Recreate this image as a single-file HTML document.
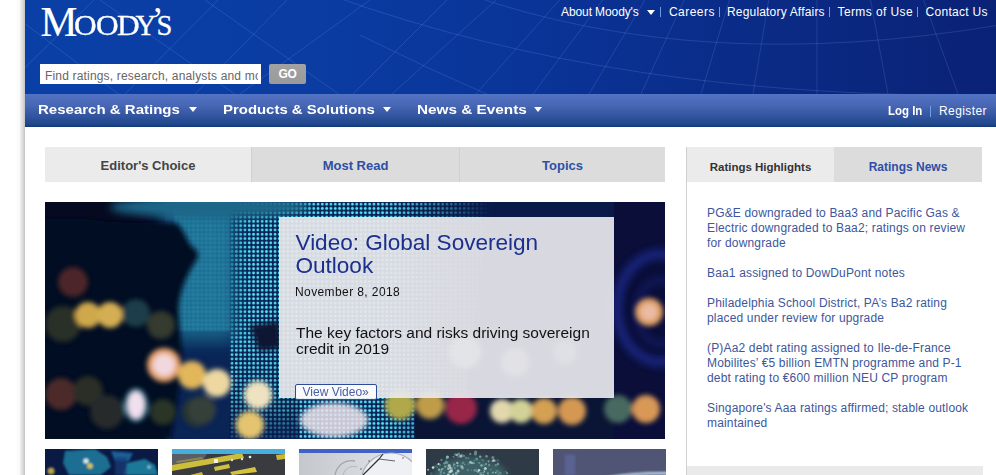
<!DOCTYPE html>
<html><head><meta charset="utf-8">
<style>
*{margin:0;padding:0;box-sizing:border-box}
html,body{width:996px;height:475px;overflow:hidden;background:#fff;font-family:"Liberation Sans",sans-serif;position:relative}
.a{position:absolute;white-space:nowrap}
#shadow{left:15px;top:0;width:10px;height:475px;background:linear-gradient(to right,#fff 0%,#f9f9f9 45%,#e8e8e8 60%,#d4d4d4 85%,#c2c2c2 100%)}
#hdr{left:25px;top:0;width:971px;height:94px;background:linear-gradient(to right,#0a40a6 0%,#0a3ca2 30%,#0a3396 55%,#0a2a84 78%,#0a2276 100%);overflow:hidden}
.lg{position:absolute;color:#fff;font-family:"Liberation Serif",serif;line-height:1;-webkit-text-stroke:0.3px #fff}
#search{left:40px;top:64px;width:221px;height:20px;background:#fff;font-size:12px;color:#666;padding:5px 0 0 5px;overflow:hidden;line-height:14px}
#search span{display:block;width:213px;overflow:hidden;letter-spacing:0.17px}
#go{left:269px;top:64px;width:37px;height:20px;background:linear-gradient(#a2a2a2,#9a9a9a);color:#fff;font-weight:bold;font-size:12px;text-align:center;line-height:21px;border-radius:2px;letter-spacing:-0.3px}
.tl{top:5px;letter-spacing:0.3px;color:#fff;font-size:12px;line-height:14px}
.sep{top:7px;width:1px;height:10px;background:#6d9ae6}
#nav{left:25px;top:94px;width:971px;height:33px;background:linear-gradient(#5373c3,#4766b4 35%,#2f529c 72%,#1d4588 94%,#123574)}
.ni{top:103px;color:#fff;font-weight:bold;font-size:13px;line-height:14px;transform-origin:0 0}
.tri{width:0;height:0;border-left:4px solid transparent;border-right:4px solid transparent;border-top:5px solid #fff}
.tab{top:147px;height:35px;line-height:38px;text-align:center;font-weight:bold;font-size:13px;color:#2e4ea8;background:#dcdcdc}
#hero{left:45px;top:202px;width:620px;height:237px;background:#0a1530;overflow:hidden}
#ov{left:279px;top:217px;width:335px;height:181px;background:rgba(232,232,236,0.93)}
#rp{left:686px;top:147px;width:1px;height:328px;background:#d0d0d0}
.rl{left:707px;margin-top:1px;color:#3d569c;font-size:12px;line-height:15px;letter-spacing:0.16px}
.thumb{top:449px;width:113px;height:26px;overflow:hidden}
</style></head><body>
<div id="shadow" class="a"></div>
<div id="hdr" class="a">
 <svg width="971" height="94" style="position:absolute;left:0;top:0" fill="none" stroke="rgba(150,185,255,0.17)" stroke-width="1"><path d="M367 94 L471.1 0 M451 94 L534.5 0 M508 94 L577.6 0 M564 94 L619.9 0 M616 94 L659.1 0 M676 94 L704.4 0 M728 94 L743.7 0 M792 94 L792.0 0 M863 94 L845.6 0 M933 94 L898.5 0 M-27 94 L69 0 M99 95 L193 0 M169 95 L262 0 M215 94 L345 0 M327 95 L422 0 M75 0 L211 95 M180 0 L315 95 M-5 20 L95 95 M445 -5 Q675 75 975 25 M305 -5 Q595 100 975 95 M335 35 Q405 70 475 100"/></svg>
 <span class="lg" style="left:15.5px;top:1.5px;font-size:41.5px;-webkit-text-stroke:0.15px #fff">M</span>
 <span class="lg" style="left:49px;top:12px;font-size:28.5px;transform:scaleX(1.1);transform-origin:0 0">O</span>
 <span class="lg" style="left:70.5px;top:12px;font-size:28.5px;transform:scaleX(1.1);transform-origin:0 0">O</span>
 <span class="lg" style="left:92px;top:12px;font-size:28.5px;transform:scaleX(1.1);transform-origin:0 0">D</span>
 <span class="lg" style="left:110.5px;top:12px;font-size:28.5px">Y</span>
 <span class="lg" style="left:126.5px;top:1.5px;font-size:36px;-webkit-text-stroke:0">’</span>
 <span class="lg" style="left:131.5px;top:12px;font-size:28.5px">S</span>
</div>
<div id="search" class="a"><span>Find ratings, research, analysts and more</span></div>
<div id="go" class="a">GO</div>

<span class="a tl" style="left:561px;letter-spacing:-0.1px">About Moody's</span>
<div class="a tri" style="left:646.5px;top:9.5px;border-left-width:4.5px;border-right-width:4.5px"></div>
<div class="a sep" style="left:660px"></div>
<span class="a tl" style="left:669px;letter-spacing:0.45px">Careers</span>
<div class="a sep" style="left:718.5px"></div>
<span class="a tl" style="left:727px;letter-spacing:0.18px">Regulatory Affairs</span>
<div class="a sep" style="left:828.5px"></div>
<span class="a tl" style="left:837.5px;letter-spacing:0.4px">Terms of Use</span>
<div class="a sep" style="left:916.5px"></div>
<span class="a tl" style="left:925.5px">Contact Us</span>

<div id="nav" class="a"></div>
<span class="a ni" style="left:38px;transform:scaleX(1.155)">Research &amp; Ratings</span>
<div class="a tri" style="left:188.5px;top:107px"></div>
<span class="a ni" style="left:223px;transform:scaleX(1.148)">Products &amp; Solutions</span>
<div class="a tri" style="left:382.5px;top:107px"></div>
<span class="a ni" style="left:417px;transform:scaleX(1.178)">News &amp; Events</span>
<div class="a tri" style="left:534px;top:107px"></div>
<span class="a" style="left:887.5px;top:104px;color:#fff;font-size:12px;font-weight:bold;line-height:14px;transform:scaleX(0.955);transform-origin:0 0">Log In</span>
<div class="a" style="left:930px;top:106px;width:1px;height:11px;background:#6fa0e4"></div>
<span class="a" style="left:939px;top:104px;color:#fff;font-size:12px;line-height:14px;letter-spacing:0.4px">Register</span>

<div class="a tab" style="left:45px;width:206px;background:#ebebeb;color:#444">Editor's Choice</div>
<div class="a tab" style="left:251px;width:208px;border-left:1px solid #d0d0d0">Most Read</div>
<div class="a tab" style="left:459px;width:206px;border-left:1px solid #d0d0d0">Topics</div>

<div id="hero" class="a"><svg width="620" height="237" viewBox="0 0 620 237">
 <defs>
  <pattern id="dots" width="4.3" height="4.3" patternUnits="userSpaceOnUse"><circle cx="2.15" cy="2.15" r="1.4" fill="#56e0f4"/></pattern>
  <pattern id="dots2" width="4.3" height="4.3" patternUnits="userSpaceOnUse"><circle cx="2.15" cy="2.15" r="1.6" fill="#3ab0d0"/></pattern>
  <linearGradient id="fadeb" x1="0" y1="0" x2="0" y2="1"><stop offset="0" stop-color="#06102a" stop-opacity="0"/><stop offset="0.55" stop-color="#06102a" stop-opacity="0.15"/><stop offset="1" stop-color="#081a50" stop-opacity="0.75"/></linearGradient>
  <linearGradient id="mg" x1="0" x2="1"><stop offset="0" stop-color="#fff"/><stop offset="0.55" stop-color="#fff"/><stop offset="0.92" stop-color="#000"/></linearGradient><mask id="mk" maskUnits="userSpaceOnUse" x="0" y="0" width="620" height="237"><rect x="184" y="0" width="286" height="237" fill="url(#mg)"/></mask>
  <mask id="mk2" maskUnits="userSpaceOnUse" x="0" y="0" width="620" height="237"><rect x="120" y="0" width="350" height="237" fill="url(#mg)"/></mask>
  <filter id="b2" x="-50%" y="-50%" width="200%" height="200%"><feGaussianBlur stdDeviation="2.6"/></filter>
  <filter id="b4" x="-50%" y="-50%" width="200%" height="200%"><feGaussianBlur stdDeviation="4"/></filter>
  <filter id="b8" x="-50%" y="-50%" width="200%" height="200%"><feGaussianBlur stdDeviation="8"/></filter>
  <filter id="b1" x="-50%" y="-50%" width="200%" height="200%"><feGaussianBlur stdDeviation="1.2"/></filter>
 </defs>
 <rect width="620" height="237" fill="#050a20"/>
 <rect x="120" y="0" width="500" height="237" fill="#0a1a48"/>
 <path d="M120 0 L470 0 L440 40 L420 196 L410 237 L120 237 Z" fill="#0a2456" mask="url(#mk2)"/>
 <path d="M184 0 L470 0 L440 40 L420 196 L410 237 L184 237 Z" fill="url(#dots)" mask="url(#mk)"/>
 <rect x="184" y="140" width="70" height="97" fill="url(#fadeb)"/>
 <rect x="118" y="-10" width="72" height="150" fill="#145e84" filter="url(#b8)"/>
 <rect x="128" y="0" width="58" height="130" fill="url(#dots2)" filter="url(#b1)" opacity="0.7"/>
 <ellipse cx="165" cy="5" rx="100" ry="11" fill="#1a6688" filter="url(#b4)"/>
 <path d="M-10 17 L40 17 C80 23 110 19 132 21 C140 30 142 38 146 44 C152 48 156 52 150 60 C144 70 138 80 134 100 C132 120 140 150 136 175 C132 200 128 220 126 237 L-10 237 Z" fill="#050a20" filter="url(#b2)"/>
 <path d="M205 124 L234 119 L236 146 L214 149 Z" fill="#0a1430" filter="url(#b2)"/>
 <rect x="370" y="196" width="250" height="41" fill="#0a1535"/>
 <rect x="569" y="0" width="51" height="237" fill="#0a0e38"/>
 <ellipse cx="616" cy="106" rx="44" ry="54" fill="none" stroke="#2a40d0" stroke-width="8" filter="url(#b4)" opacity="0.55"/>
 <ellipse cx="616" cy="110" rx="24" ry="32" fill="none" stroke="#2436b8" stroke-width="5" filter="url(#b4)" opacity="0.4"/>
 <g filter="url(#b2)">
  <circle cx="18" cy="122" r="18" fill="#2e3429" opacity="0.9"/>
  <circle cx="28" cy="80" r="15" fill="#5a2a2a" opacity="0.85"/>
  <circle cx="43" cy="113" r="13" fill="#cfa84c"/>
  <circle cx="65" cy="113" r="13" fill="#d4ae52"/>
  <circle cx="91" cy="111" r="14" fill="#1a3e4a"/>
  <circle cx="116" cy="123" r="14" fill="#363a2e"/>
  <circle cx="16" cy="192" r="16" fill="#4e2a2a"/>
  <circle cx="43" cy="189" r="15" fill="#2a2e28"/>
  <circle cx="62" cy="210" r="17" fill="#262a2a"/>
  <circle cx="118" cy="210" r="13" fill="#2c3428"/>
  <circle cx="152" cy="210" r="15" fill="#283430"/>
  <circle cx="119" cy="163" r="17" fill="#e6a26a"/>
  <circle cx="119" cy="163" r="11" fill="#f2d8de"/>
  <circle cx="147" cy="173" r="14" fill="#e2b65a"/>
  <ellipse cx="91" cy="203" rx="12" ry="17" fill="#5ac0d0" opacity="0.6"/>
  <ellipse cx="91" cy="203" rx="9" ry="14" fill="#f0e0ee"/>
  <circle cx="172" cy="181" r="14" fill="#ecd8a0"/>
  <circle cx="157" cy="208" r="14" fill="#34403a"/>
  <circle cx="205" cy="223" r="14" fill="#e4c470"/>
  <circle cx="213" cy="193" r="14" fill="#eee2c0"/>
  <ellipse cx="289" cy="218" rx="34" ry="17" fill="#ece2ea" opacity="0.85"/>
  <circle cx="355" cy="203" r="15" fill="#b0a848"/>
  <circle cx="385" cy="203" r="14" fill="#c09c48"/>
  <circle cx="416" cy="206" r="16" fill="#98284a"/>
  <circle cx="457" cy="209" r="12" fill="#e2d8ae"/>
  <circle cx="476" cy="209" r="12" fill="#d2d298"/>
  <circle cx="499" cy="209" r="13" fill="#d4a052"/>
  <circle cx="527" cy="209" r="14" fill="#d49852"/>
  <circle cx="573" cy="207" r="14" fill="#466a60"/>
  <circle cx="601" cy="207" r="14" fill="#d89856"/>
  <circle cx="604" cy="110" r="14" fill="#e0a064"/>
  <circle cx="604" cy="110" r="8" fill="#eabca6"/>
  <circle cx="420" cy="150" r="16" fill="#f0f0f0" opacity="0.6"/>
  <circle cx="470" cy="160" r="14" fill="#f0f0f0" opacity="0.5"/>
  <circle cx="520" cy="150" r="12" fill="#f0f0f0" opacity="0.4"/>
 </g>
</svg></div>
<div id="ov" class="a"></div>
<span class="a" style="left:295.5px;top:230.5px;color:#1b2f8e;font-size:22.6px;line-height:23px;letter-spacing:-0.03px">Video: Global Sovereign<br>Outlook</span>
<span class="a" style="left:295px;top:285px;color:#111;font-size:12px;line-height:14px;letter-spacing:0.4px">November 8, 2018</span>
<span class="a" style="left:296px;top:325px;color:#111;font-size:15.5px;line-height:16px">The key factors and risks driving sovereign<br>credit in 2019</span>
<div class="a" style="left:295px;top:384px;width:82px;height:16px;border:1px solid #2d4b9a;border-radius:2px;background:rgba(255,255,255,0.85)"></div>
<span class="a" style="left:302.5px;top:384.5px;color:#4a60a6;font-size:12px;line-height:14px">View Video»</span>

<div id="rp" class="a"></div>
<div class="a tab" style="left:687px;width:147px;background:#ebebeb;color:#333;font-size:11.5px;line-height:40px">Ratings Highlights</div>
<div class="a tab" style="left:834px;width:148px;font-size:12px;line-height:40px">Ratings News</div>
<div class="a rl" style="top:205px">PG&amp;E downgraded to Baa3 and Pacific Gas &amp;<br>Electric downgraded to Baa2; ratings on review<br>for downgrade</div>
<div class="a rl" style="top:265px">Baa1 assigned to DowDuPont notes</div>
<div class="a rl" style="top:295px">Philadelphia School District, PA’s Ba2 rating<br>placed under review for upgrade</div>
<div class="a rl" style="top:340px">(P)Aa2 debt rating assigned to Ile-de-France<br>Mobilites’ €5 billion EMTN programme and P-1<br>debt rating to €600 million NEU CP program</div>
<div class="a rl" style="top:400px">Singapore's Aaa ratings affirmed; stable outlook<br>maintained</div>
<div class="a" style="left:687px;top:466px;width:296px;height:9px;background:#eaeaea"></div>

<div class="a thumb" style="left:45px"><svg width="113" height="26"><defs><filter id="tb1"><feGaussianBlur stdDeviation="1.3"/></filter></defs>
 <rect width="113" height="26" fill="#0a1a44"/>
 <g filter="url(#tb1)">
 <path d="M20 2 L50 0 L62 8 L66 18 L56 26 L24 26 L18 14 Z" fill="#1a6e92"/>
 <path d="M66 2 L88 4 L84 12 L70 12 Z" fill="#2070a8" opacity="0.8"/>
 <path d="M82 14 L100 10 L110 16 L113 26 L78 26 Z" fill="#1e7898"/>
 <rect x="70" y="8" width="12" height="18" fill="#183a7a" opacity="0.7"/>
 <circle cx="41" cy="12" r="2.6" fill="#d8ecf0"/><circle cx="45" cy="17" r="2.8" fill="#d8c460"/><circle cx="6" cy="22" r="3.6" fill="#b8a048"/><circle cx="104" cy="18" r="1.5" fill="#a0d0e0"/>
 </g>
</svg></div>
<div class="a thumb" style="left:172px"><svg width="113" height="26"><defs><filter id="tb2"><feGaussianBlur stdDeviation="0.7"/></filter></defs>
 <rect width="113" height="26" fill="#393b3e"/>
 <g filter="url(#tb2)">
 <path d="M0 5 L35 5 L30 13 L0 16 Z" fill="#5a5e66"/>
 <path d="M0 16 L70 4 L72 9 L0 22 Z" fill="#cdbd3c"/>
 <path d="M4 12 L30 8 L31 10 L5 14 Z" fill="#b0a040" opacity="0.6"/>
 <path d="M42 18 L57 15 L58 19 L43 22 Z" fill="#cfc040"/>
 <path d="M58 23 L83 18 L85 23 L60 26 Z" fill="#d4c23e"/>
 <path d="M104 6 L113 5 L113 10 L105 11 Z" fill="#c8b838"/>
 <path d="M18 26 L30 23 L31 26 Z" fill="#c8b838"/>
 <rect x="42" y="10" width="4" height="4" fill="#f0f0f0"/><circle cx="60" cy="11" r="1.2" fill="#ddd"/><circle cx="70" cy="10" r="1.2" fill="#ddd"/><circle cx="78" cy="8" r="1.3" fill="#eee"/>
 </g>
 <rect width="113" height="5" fill="#45b0e0"/>
</svg></div>
<div class="a thumb" style="left:299px"><svg width="113" height="26"><defs><filter id="tb3"><feGaussianBlur stdDeviation="0.7"/></filter><linearGradient id="g3" x1="0" x2="1"><stop offset="0" stop-color="#c4c8cc"/><stop offset="1" stop-color="#e4e8ec"/></linearGradient></defs>
 <rect width="113" height="26" fill="url(#g3)"/>
 <rect width="113" height="4" fill="#3f62c4"/>
 <g filter="url(#tb3)"><circle cx="92" cy="34" r="30" fill="#eef0f4" stroke="#a8b0bc" stroke-width="1.2"/>
 <path d="M64 26 L80 10 L84 5" stroke="#2c3038" stroke-width="1.2" fill="none"/><path d="M80 10 L96 12" stroke="#50565e" stroke-width="0.9" fill="none"/>
 <circle cx="70" cy="12" r="0.8" fill="#666"/><circle cx="104" cy="9" r="0.8" fill="#666"/><circle cx="62" cy="20" r="0.8" fill="#666"/>
 <path d="M36 26 C38 16 46 10 56 12" stroke="#a0a6b0" stroke-width="1.3" fill="none"/><path d="M44 26 C46 19 52 16 58 18" stroke="#b0b6c0" stroke-width="1" fill="none"/></g>
</svg></div>
<div class="a thumb" style="left:426px"><svg width="113" height="26"><defs><filter id="tb4"><feGaussianBlur stdDeviation="0.5"/></filter><filter id="tb4b"><feGaussianBlur stdDeviation="3"/></filter></defs>
 <rect width="113" height="26" fill="#2e3a46"/>
 <ellipse cx="44" cy="30" rx="38" ry="22" fill="#4a7a7c" opacity="0.6" filter="url(#tb4b)"/>
 <g filter="url(#tb4)"><circle cx="19.3" cy="17.6" r="1.2" fill="#b8e0d8" opacity="0.52"/><circle cx="61.9" cy="24.4" r="1.1" fill="#b8e0d8" opacity="0.44"/><circle cx="46.2" cy="14.0" r="1.2" fill="#88c8c0" opacity="0.82"/><circle cx="69.8" cy="23.7" r="0.8" fill="#d8f0e8" opacity="0.74"/><circle cx="72.0" cy="15.1" r="1.3" fill="#b8e0d8" opacity="0.46"/><circle cx="64.8" cy="20.8" r="0.7" fill="#5a9a98" opacity="0.86"/><circle cx="22.3" cy="25.9" r="1.4" fill="#b8e0d8" opacity="0.88"/><circle cx="66.7" cy="23.8" r="1.1" fill="#5a9a98" opacity="0.80"/><circle cx="35.7" cy="17.6" r="1.5" fill="#d8f0e8" opacity="0.50"/><circle cx="7.1" cy="18.6" r="1.3" fill="#d8f0e8" opacity="0.88"/><circle cx="11.1" cy="15.6" r="0.7" fill="#5a9a98" opacity="0.64"/><circle cx="40.1" cy="9.1" r="1.4" fill="#5a9a98" opacity="0.59"/><circle cx="36.5" cy="19.1" r="1.5" fill="#b8e0d8" opacity="0.48"/><circle cx="21.4" cy="8.1" r="1.6" fill="#88c8c0" opacity="0.89"/><circle cx="32.1" cy="22.1" r="1.5" fill="#d8f0e8" opacity="0.66"/><circle cx="18.2" cy="14.4" r="0.9" fill="#5a9a98" opacity="0.89"/><circle cx="31.3" cy="13.9" r="1.2" fill="#d8f0e8" opacity="0.61"/><circle cx="34.3" cy="8.0" r="1.0" fill="#5a9a98" opacity="0.44"/><circle cx="25.4" cy="20.1" r="1.6" fill="#b8e0d8" opacity="0.50"/><circle cx="27.6" cy="17.1" r="0.7" fill="#88c8c0" opacity="0.65"/><circle cx="53.2" cy="14.0" r="1.2" fill="#5a9a98" opacity="0.71"/><circle cx="23.2" cy="16.6" r="1.6" fill="#d8f0e8" opacity="0.65"/><circle cx="22.0" cy="18.2" r="0.8" fill="#5a9a98" opacity="0.66"/><circle cx="11.0" cy="18.1" r="0.9" fill="#5a9a98" opacity="0.81"/><circle cx="27.9" cy="8.3" r="0.9" fill="#88c8c0" opacity="0.32"/><circle cx="12.6" cy="15.2" r="1.3" fill="#88c8c0" opacity="0.44"/><circle cx="50.2" cy="21.0" r="1.3" fill="#5a9a98" opacity="0.66"/><circle cx="12.6" cy="15.0" r="0.9" fill="#d8f0e8" opacity="0.88"/><circle cx="60.5" cy="7.3" r="1.4" fill="#88c8c0" opacity="0.57"/><circle cx="20.4" cy="9.6" r="0.9" fill="#5a9a98" opacity="0.64"/><circle cx="57.3" cy="25.7" r="1.0" fill="#88c8c0" opacity="0.67"/><circle cx="44.3" cy="5.0" r="0.9" fill="#b8e0d8" opacity="0.58"/><circle cx="45.5" cy="21.1" r="0.6" fill="#88c8c0" opacity="0.55"/><circle cx="13.9" cy="15.9" r="1.1" fill="#5a9a98" opacity="0.80"/><circle cx="79.7" cy="22.7" r="0.7" fill="#5a9a98" opacity="0.81"/><circle cx="30.2" cy="24.2" r="1.5" fill="#88c8c0" opacity="0.78"/><circle cx="72.3" cy="25.3" r="0.8" fill="#d8f0e8" opacity="0.31"/><circle cx="21.8" cy="13.1" r="0.7" fill="#b8e0d8" opacity="0.61"/><circle cx="2.1" cy="20.7" r="1.0" fill="#d8f0e8" opacity="0.62"/><circle cx="17.0" cy="19.8" r="0.8" fill="#88c8c0" opacity="0.79"/><circle cx="15.4" cy="10.9" r="1.1" fill="#d8f0e8" opacity="0.38"/><circle cx="47.9" cy="14.1" r="0.9" fill="#88c8c0" opacity="0.75"/><circle cx="44.4" cy="13.3" r="1.5" fill="#d8f0e8" opacity="0.58"/><circle cx="54.7" cy="24.6" r="1.6" fill="#b8e0d8" opacity="0.33"/><circle cx="42.2" cy="15.3" r="1.0" fill="#5a9a98" opacity="0.49"/><circle cx="33.8" cy="16.5" r="1.0" fill="#5a9a98" opacity="0.46"/><circle cx="66.6" cy="12.1" r="1.0" fill="#d8f0e8" opacity="0.64"/><circle cx="54.2" cy="7.6" r="1.2" fill="#d8f0e8" opacity="0.53"/><circle cx="36.4" cy="14.6" r="1.0" fill="#5a9a98" opacity="0.60"/><circle cx="58.4" cy="16.0" r="1.3" fill="#5a9a98" opacity="0.45"/><circle cx="32.6" cy="5.1" r="1.6" fill="#5a9a98" opacity="0.86"/><circle cx="49.4" cy="5.0" r="1.5" fill="#d8f0e8" opacity="0.37"/><circle cx="68.4" cy="11.8" r="1.3" fill="#b8e0d8" opacity="0.62"/><circle cx="63.1" cy="16.0" r="1.1" fill="#d8f0e8" opacity="0.36"/><circle cx="22.4" cy="19.8" r="1.3" fill="#d8f0e8" opacity="0.62"/><circle cx="27.2" cy="7.5" r="0.6" fill="#d8f0e8" opacity="0.50"/><circle cx="14.7" cy="25.0" r="1.2" fill="#5a9a98" opacity="0.72"/><circle cx="55.3" cy="25.4" r="0.7" fill="#88c8c0" opacity="0.76"/><circle cx="71.7" cy="11.6" r="1.5" fill="#5a9a98" opacity="0.34"/><circle cx="27.1" cy="25.6" r="1.1" fill="#88c8c0" opacity="0.90"/><circle cx="66.9" cy="8.6" r="1.5" fill="#b8e0d8" opacity="0.45"/><circle cx="49.6" cy="3.1" r="1.6" fill="#88c8c0" opacity="0.53"/><circle cx="32.1" cy="7.9" r="0.8" fill="#b8e0d8" opacity="0.40"/><circle cx="29.5" cy="5.5" r="1.3" fill="#b8e0d8" opacity="0.40"/><circle cx="35.6" cy="7.9" r="1.4" fill="#5a9a98" opacity="0.41"/><circle cx="15.0" cy="22.9" r="1.3" fill="#5a9a98" opacity="0.86"/><circle cx="71.1" cy="22.3" r="1.5" fill="#5a9a98" opacity="0.65"/><circle cx="28.9" cy="19.1" r="0.8" fill="#88c8c0" opacity="0.78"/><circle cx="31.6" cy="16.8" r="1.0" fill="#88c8c0" opacity="0.76"/><circle cx="62.6" cy="12.3" r="1.1" fill="#d8f0e8" opacity="0.42"/><circle cx="67.5" cy="11.1" r="1.1" fill="#d8f0e8" opacity="0.54"/><circle cx="25.4" cy="22.0" r="1.6" fill="#d8f0e8" opacity="0.73"/><circle cx="62.0" cy="25.3" r="0.7" fill="#5a9a98" opacity="0.41"/><circle cx="55.0" cy="10.0" r="0.8" fill="#5a9a98" opacity="0.32"/><circle cx="5.3" cy="24.6" r="1.4" fill="#5a9a98" opacity="0.37"/><circle cx="26.4" cy="18.1" r="0.6" fill="#5a9a98" opacity="0.65"/><circle cx="28.2" cy="15.5" r="1.2" fill="#88c8c0" opacity="0.59"/><circle cx="62.3" cy="17.5" r="0.7" fill="#5a9a98" opacity="0.38"/><circle cx="19.6" cy="14.2" r="0.7" fill="#5a9a98" opacity="0.37"/><circle cx="70.0" cy="15.4" r="0.7" fill="#5a9a98" opacity="0.48"/><circle cx="48.3" cy="11.7" r="0.7" fill="#5a9a98" opacity="0.70"/><circle cx="20.2" cy="12.3" r="0.8" fill="#88c8c0" opacity="0.75"/><circle cx="74.1" cy="24.1" r="1.5" fill="#88c8c0" opacity="0.37"/><circle cx="56.9" cy="11.2" r="1.2" fill="#5a9a98" opacity="0.55"/><circle cx="38.8" cy="15.6" r="0.7" fill="#d8f0e8" opacity="0.41"/><circle cx="15.7" cy="20.5" r="1.0" fill="#b8e0d8" opacity="0.65"/><circle cx="24.3" cy="18.7" r="1.1" fill="#d8f0e8" opacity="0.82"/><circle cx="18.8" cy="13.9" r="1.5" fill="#5a9a98" opacity="0.61"/><circle cx="35.8" cy="6.1" r="1.4" fill="#b8e0d8" opacity="0.34"/><circle cx="69.8" cy="16.2" r="1.2" fill="#88c8c0" opacity="0.41"/><circle cx="55.5" cy="16.4" r="1.2" fill="#88c8c0" opacity="0.89"/><circle cx="18.0" cy="23.9" r="1.2" fill="#88c8c0" opacity="0.42"/><circle cx="23.8" cy="22.9" r="1.4" fill="#d8f0e8" opacity="0.77"/><circle cx="37.3" cy="13.8" r="1.2" fill="#5a9a98" opacity="0.79"/><circle cx="50.6" cy="9.9" r="1.5" fill="#5a9a98" opacity="0.89"/><circle cx="50.2" cy="22.4" r="0.7" fill="#d8f0e8" opacity="0.41"/><circle cx="57.9" cy="21.6" r="0.8" fill="#b8e0d8" opacity="0.40"/><circle cx="58.6" cy="22.7" r="0.7" fill="#b8e0d8" opacity="0.79"/><circle cx="20.5" cy="13.9" r="1.4" fill="#b8e0d8" opacity="0.39"/><circle cx="48.4" cy="21.4" r="1.1" fill="#88c8c0" opacity="0.52"/><circle cx="41.9" cy="21.1" r="1.5" fill="#5a9a98" opacity="0.50"/><circle cx="53.0" cy="21.3" r="1.3" fill="#d8f0e8" opacity="0.81"/><circle cx="59.3" cy="19.5" r="1.5" fill="#d8f0e8" opacity="0.78"/><circle cx="34.7" cy="7.2" r="1.4" fill="#d8f0e8" opacity="0.59"/><circle cx="30.8" cy="6.1" r="1.1" fill="#b8e0d8" opacity="0.72"/><circle cx="60.0" cy="15.0" r="0.9" fill="#b8e0d8" opacity="0.55"/><circle cx="37.9" cy="6.9" r="1.1" fill="#88c8c0" opacity="0.54"/><circle cx="67.1" cy="23.2" r="0.8" fill="#b8e0d8" opacity="0.52"/><circle cx="57.2" cy="23.6" r="0.8" fill="#88c8c0" opacity="0.58"/><circle cx="42.4" cy="9.1" r="1.0" fill="#88c8c0" opacity="0.38"/><circle cx="9.0" cy="17.2" r="1.0" fill="#5a9a98" opacity="0.54"/><circle cx="52.1" cy="22.8" r="1.1" fill="#b8e0d8" opacity="0.54"/><circle cx="81.0" cy="24.2" r="1.1" fill="#b8e0d8" opacity="0.44"/><circle cx="13.1" cy="20.8" r="1.2" fill="#d8f0e8" opacity="0.51"/></g>
</svg></div>
<div class="a thumb" style="left:553px"><svg width="113" height="26"><defs><filter id="tb5"><feGaussianBlur stdDeviation="1"/></filter></defs>
 <rect width="113" height="26" fill="#4c5078"/>
 <rect x="0" y="0" width="113" height="26" fill="#565a72" opacity="0.5"/>
 <g filter="url(#tb5)"><ellipse cx="110" cy="40" rx="80" ry="16" fill="#4a5c8c" stroke="#c8e0f0" stroke-width="2"/><rect x="12" y="6" width="10" height="20" fill="#6070b0" opacity="0.5"/></g>
</svg></div>
</body></html>
